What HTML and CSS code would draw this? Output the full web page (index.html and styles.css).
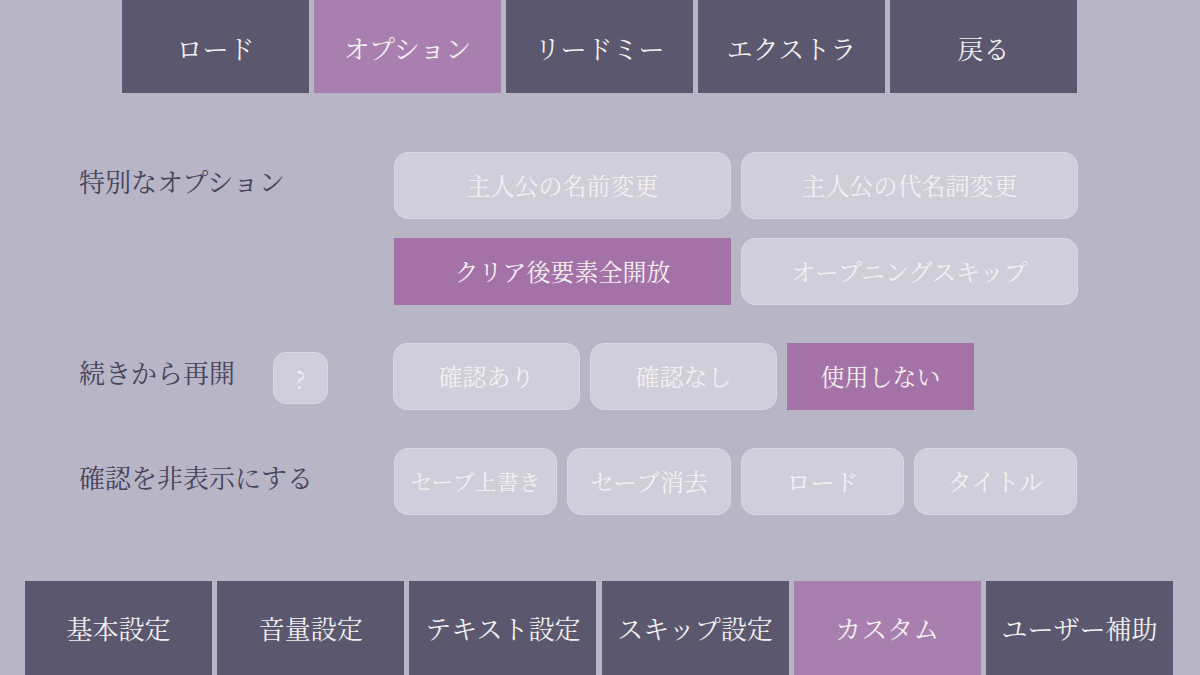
FILE: index.html
```html
<!DOCTYPE html>
<html lang="ja">
<head>
<meta charset="utf-8">
<link rel="stylesheet" href="styles.css">
</head>
<body>
<div class="page">
  <nav class="topnav">
    <div class="tab">ロード</div>
    <div class="tab active">オプション</div>
    <div class="tab">リードミー</div>
    <div class="tab">エクストラ</div>
    <div class="tab">戻る</div>
  </nav>

  <main class="options">
    <section class="row">
      <div class="label"><span class="label-text">特別なオプション</span></div>
      <div class="btns grid2">
        <div class="btn">主人公の名前変更</div>
        <div class="btn">主人公の代名詞変更</div>
        <div class="btn on">クリア後要素全開放</div>
        <div class="btn">オープニングスキップ</div>
      </div>
    </section>

    <section class="row row-gap">
      <div class="label"><span class="label-text">続きから再開</span><span class="help">?</span></div>
      <div class="btns grid3">
        <div class="btn">確認あり</div>
        <div class="btn">確認なし</div>
        <div class="btn on">使用しない</div>
      </div>
    </section>

    <section class="row row-gap">
      <div class="label"><span class="label-text">確認を非表示にする</span></div>
      <div class="btns grid4">
        <div class="btn small">セーブ上書き</div>
        <div class="btn">セーブ消去</div>
        <div class="btn">ロード</div>
        <div class="btn">タイトル</div>
      </div>
    </section>
  </main>

  <nav class="bottomnav">
    <div class="tab">基本設定</div>
    <div class="tab">音量設定</div>
    <div class="tab">テキスト設定</div>
    <div class="tab">スキップ設定</div>
    <div class="tab active">カスタム</div>
    <div class="tab">ユーザー補助</div>
  </nav>
</div>
</body>
</html>
```

FILE: styles.css
```css
* { box-sizing: border-box; }

html, body {
  margin: 0;
  padding: 0;
}

body {
  width: 1200px;
  height: 675px;
  overflow: hidden;
  background: #b8b5c7;
  font-family: "Noto Serif CJK JP", "Noto Sans CJK JP", serif;
}

.page {
  display: flex;
  flex-direction: column;
  height: 675px;
}

.topnav {
  display: flex;
  gap: 5px;
  padding-left: 122px;
  height: 93px;
}

.bottomnav {
  display: flex;
  gap: 5.2px;
  padding-left: 25px;
  margin-top: auto;
  height: 94px;
}

.tab {
  width: 187px;
  height: 100%;
  background: #5a576e;
  color: #f2f0f0;
  font-size: 26px;
  display: flex;
  align-items: center;
  justify-content: center;
  white-space: nowrap;
}

.topnav .tab { padding-top: 2px; }
.bottomnav .tab { padding-bottom: 2px; }

.tab.active {
  background: #a87fae;
}

.options {
  padding-left: 79px;
  margin-top: 59px;
}

.row {
  display: flex;
}

.row-gap {
  margin-top: 38px;
}

.label {
  width: 315px;
  height: 67px;
  display: flex;
  align-items: center;
  padding-bottom: 10px;
  color: #46435b;
  font-size: 26px;
  white-space: nowrap;
}

.help {
  align-self: flex-start;
  width: 55px;
  height: 52px;
  margin-left: 38px;
  margin-top: 9px;
  border-radius: 13px;
  background: #d0ceda;
  border: 1px solid #d9d7e1;
  color: #f3f1ef;
  font-size: 24px;
  display: flex;
  align-items: center;
  justify-content: center;
}

.btns {
  display: grid;
  gap: 19px 10px;
}

.grid2 { grid-template-columns: 337px 337px; }
.grid3 { grid-template-columns: 187px 187px 187px; margin-left: -1px; }
.grid4 { grid-template-columns: 163px 164px 163px 163px; }

.btn {
  height: 67px;
  border-radius: 14px;
  background: #d0ceda;
  border: 1px solid #dad8e2;
  color: #f3f1ef;
  font-size: 24px;
  display: flex;
  align-items: center;
  justify-content: center;
  padding-bottom: 3px;
  white-space: nowrap;
}

.btn.small { font-size: 22px; }

.btn.on {
  background: #a572a7;
  border-color: #a572a7;
  border-radius: 0;
}
```
